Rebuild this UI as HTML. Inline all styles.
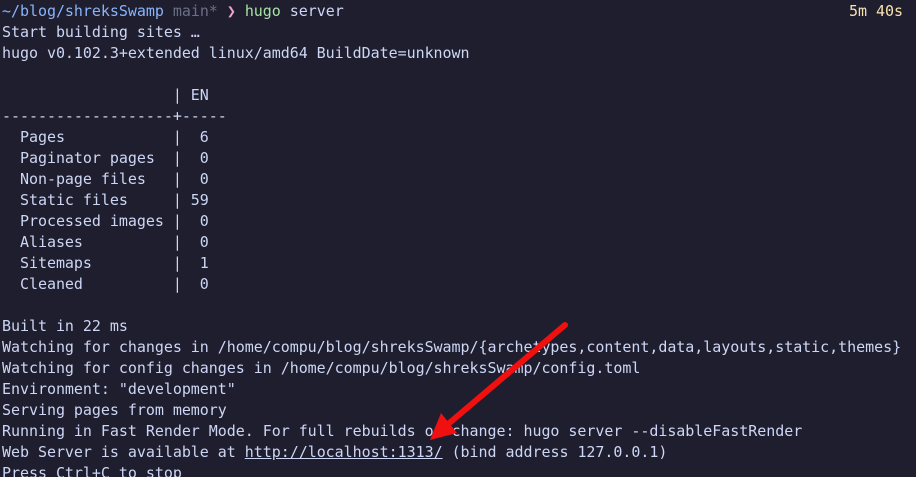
<!DOCTYPE html>
<html><head><meta charset="utf-8"><style>
html,body{margin:0;padding:0;background:#1e1e2e;width:916px;height:477px;overflow:hidden}
pre{margin:0;padding:1px 0 0 2px;font-family:"DejaVu Sans Mono","Liberation Mono",monospace;font-size:15px;letter-spacing:-0.04px;line-height:21px;color:#cdd6f4;position:relative}
.b{color:#89b4fa}.g{color:#6c7086}.p{color:#f5a0d0}.gr{color:#a6e3a1}.y{color:#f9e2af}
.t{position:absolute;right:13px;top:1px}
u{text-decoration:underline}
svg{position:absolute;left:0;top:0}
</style></head><body>
<pre><span class="b">~/blog/shreksSwamp</span> <span class="g">main*</span> <span class="p">❯</span> <span class="gr">hugo</span> server<span class="t y">5m 40s</span>
Start building sites …
hugo v0.102.3+extended linux/amd64 BuildDate=unknown

                   | EN
-------------------+-----
  Pages            |  6
  Paginator pages  |  0
  Non-page files   |  0
  Static files     | 59
  Processed images |  0
  Aliases          |  0
  Sitemaps         |  1
  Cleaned          |  0

Built in 22 ms
Watching for changes in /home/compu/blog/shreksSwamp/{archetypes,content,data,layouts,static,themes}
Watching for config changes in /home/compu/blog/shreksSwamp/config.toml
Environment: "development"
Serving pages from memory
Running in Fast Render Mode. For full rebuilds on change: hugo server --disableFastRender
Web Server is available at <u>http://localhost:1313/</u> (bind address 127.0.0.1)
Press Ctrl+C to stop</pre>
<svg width="916" height="477"><line x1="565" y1="325" x2="447" y2="425" stroke="#f01010" stroke-width="6" stroke-linecap="round"/><polygon points="430,440 441,413 457,433" fill="#f01010"/></svg>
</body></html>
